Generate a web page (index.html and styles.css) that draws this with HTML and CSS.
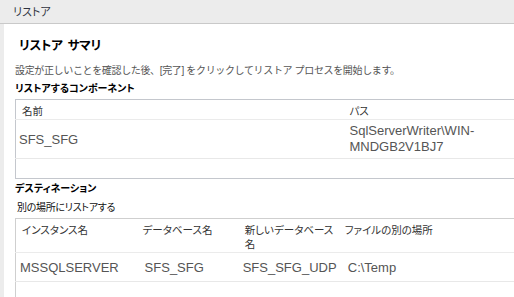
FILE: index.html
```html
<!DOCTYPE html>
<html lang="ja">
<head>
<meta charset="utf-8">
<link rel="stylesheet" href="styles.css">
</head>
<body>
<div class="app">
  <div class="topbar"><span class="topbar-title">リストア</span></div>
  <div class="panel">
    <h1 class="title">リストア サマリ</h1>
    <p class="desc">設定が正しいことを確認した後、[完了] をクリックしてリストア プロセスを開始します。</p>
    <h2 class="section">リストアするコンポーネント</h2>
    <table class="grid grid-comp">
      <colgroup><col class="c-name"><col class="c-path"><col></colgroup>
      <thead>
        <tr class="head"><th class="pad-a">名前</th><th class="pad-b">パス</th><th></th></tr>
      </thead>
      <tbody>
        <tr class="row-data"><td class="pad-data">SFS_SFG</td><td class="pad-b path">SqlServerWriter\WIN-MNDGB2V1BJ7</td><td></td></tr>
        <tr class="row-empty"><td></td><td></td><td></td></tr>
      </tbody>
    </table>
    <h2 class="section section-dest">デスティネーション</h2>
    <p class="sub">別の場所にリストアする</p>
    <table class="grid grid-dest">
      <colgroup><col class="d1"><col class="d2"><col class="d3"><col class="d4"></colgroup>
      <thead>
        <tr class="head2"><th class="h1">インスタンス名</th><th class="h2">データベース名</th><th class="h3">新しいデータベース名</th><th class="h4">ファイルの別の場所</th></tr>
      </thead>
      <tbody>
        <tr class="row-data2"><td class="v1">MSSQLSERVER</td><td class="v2">SFS_SFG</td><td class="v3">SFS_SFG_UDP</td><td class="v4">C:\Temp</td></tr>
        <tr class="row-empty2"><td></td><td></td><td></td><td></td></tr>
      </tbody>
    </table>
  </div>
</div>
</body>
</html>
```

FILE: styles.css
```css
* { box-sizing: border-box; }
html, body { margin: 0; padding: 0; }
body {
  width: 514px;
  height: 297px;
  overflow: hidden;
  font-family: "Liberation Sans", "Noto Sans CJK JP", sans-serif;
  background: #ececec;
}
.app {
  display: flex;
  flex-direction: column;
  height: 297px;
}
.topbar {
  height: 24px;
  background: #ececec;
  border-bottom: 1px solid #c9c9c9;
  padding-left: 13px;
  display: flex;
  align-items: center;
}
.topbar-title {
  font-size: 11px;
  color: #2f3340;
  line-height: 14px;
  font-feature-settings: "palt";
}
.panel {
  flex: 1;
  margin-left: 4px;
  background: #fff;
  padding-left: 11px;
  overflow: hidden;
  min-width: 0;
}
.title {
  margin: 14px 0 0 4px;
  font-size: 12.5px;
  font-weight: bold;
  line-height: 16px;
  color: #000;
  letter-spacing: -0.3px;
  font-feature-settings: "palt";
  word-spacing: 2px;
}
.desc {
  margin: 10px 0 0 0;
  font-size: 10px;
  line-height: 14px;
  color: #555;
  letter-spacing: -0.35px;
}
.section {
  margin: 4px 0 0 0;
  font-size: 10px;
  font-weight: bold;
  line-height: 14px;
  color: #000;
  font-feature-settings: "palt";
}
.grid {
  border-collapse: collapse;
  table-layout: fixed;
  border: 1px solid #c4c7cd;
  border-right: none;
}
.grid-comp { width: 640px; margin-top: 3px; }
.c-name { width: 333px; }
.c-path { width: 150px; }
.grid th {
  font-weight: normal;
  text-align: left;
  font-size: 10.5px;
  color: #333;
  padding: 0;
  vertical-align: top;
  font-feature-settings: "palt";
}
.grid td {
  padding: 0;
  font-size: 13px;
  color: #555;
}
.head { height: 20px; border-bottom: 1px solid #ebebeb; }
.head th { padding-top: 4px; line-height: 14px; }
.pad-a { padding-left: 6px !important; }
.pad-b { padding-left: 1px !important; }
.pad-data { padding-left: 3px !important; }
.row-data { height: 39px; border-bottom: 1px solid #e8e8e8; }
.path { line-height: 16px; }
.row-empty { height: 20px; }
.section-dest { margin-top: 3px; }
.sub {
  margin: 5px 0 0 2px;
  font-size: 10px;
  line-height: 14px;
  color: #111;
  letter-spacing: -0.3px;
  font-feature-settings: "palt";
}
.grid-dest { width: 640px; margin-top: 3px; border-color: #cfcfcf; }
.d1 { width: 122px; }
.d2 { width: 100px; }
.d3 { width: 100px; }
.d4 { width: 317px; }
.head2 { height: 34px; border-bottom: 1px solid #ebebeb; }
.head2 th { padding-top: 4px; line-height: 14px; padding-right: 2px; }
.h1 { padding-left: 6px !important; }
.h2 { padding-left: 5px !important; }
.h3 { padding-left: 7px !important; }
.h4 { padding-left: 7px !important; }
.row-data2 { height: 29px; border-bottom: 1px solid #e8e8e8; }
.v1 { padding-left: 4px !important; }
.v2 { padding-left: 7px !important; }
.v3 { padding-left: 5px !important; }
.v4 { padding-left: 10px !important; }
.row-empty2 { height: 30px; }
```
